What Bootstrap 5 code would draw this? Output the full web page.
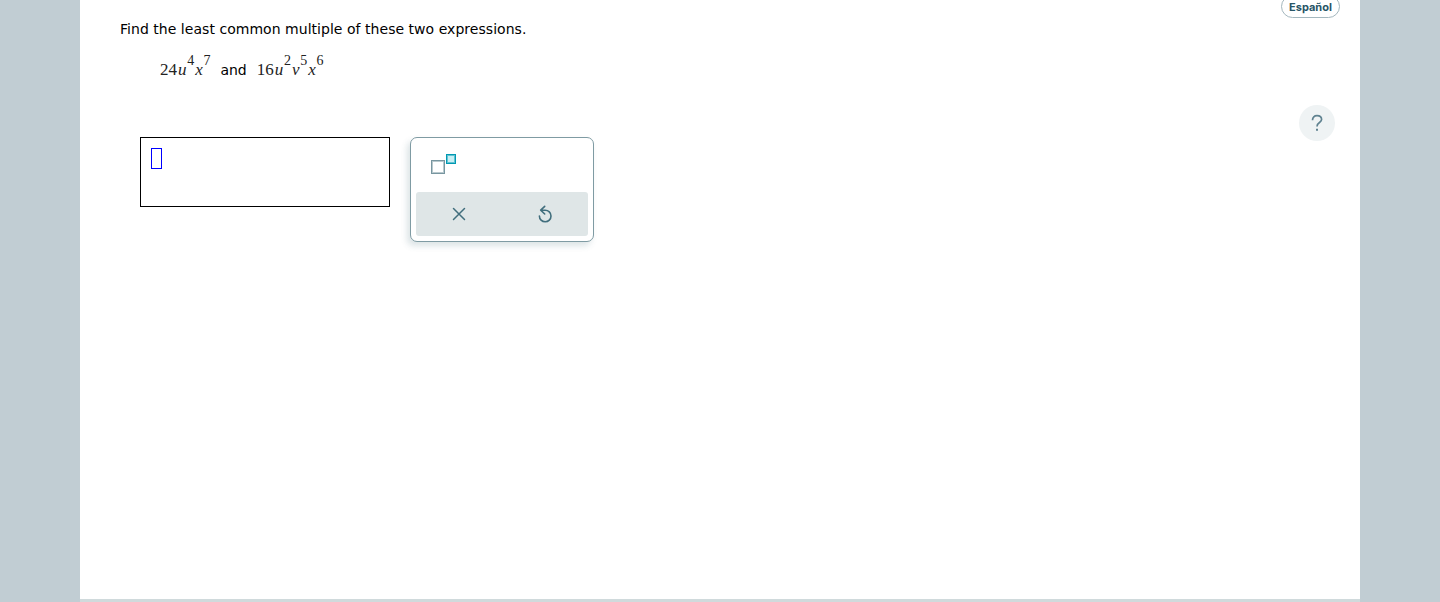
<!DOCTYPE html>
<html lang="en">

<head>
    <meta charset="UTF-8">
    <meta name="viewport" content="width=device-width, initial-scale=1.0">
    <title>Least Common Multiple</title>
    <link href="https://cdn.jsdelivr.net/npm/bootstrap@5.3.0/dist/css/bootstrap.min.css" rel="stylesheet">
    <style>
        body {
            background: #c1cdd3;
            color: #000;
            font-family: "DejaVu Sans", Verdana, sans-serif;
            font-size: 14px;
            line-height: 20px;
        }

        .sheet {
            width: 1280px;
            height: 602px;
            border-bottom: 3px solid #d0dadc;
            padding: 0 20px 0 40px;
        }

        .question {
            padding-top: 19px;
        }

        .prompt {
            letter-spacing: 0.035px;
        }

        .expressions {
            height: 30px;
            margin: 16px 0 0 40px;
            line-height: 30px;
        }

        .and-word {
            margin: 0 10px 0 10px;
        }

        .math {
            font-family: "Liberation Serif", "Times New Roman", serif;
            font-size: 17px;
            color: #222;
        }

        .math i {
            margin-left: 1px;
        }

        .math sup {
            font-size: 14px;
            line-height: 0;
            top: 0;
            vertical-align: 10px;
            margin-left: 0.7px;
        }

        .answer-row {
            gap: 20px;
            margin: 52px 0 0 20px;
        }

        .answer-box {
            width: 250px;
            height: 70px;
            border: 1px solid #000;
            padding: 10px;
        }

        .blank {
            width: 11px;
            height: 21px;
            border: 1px solid #00f;
        }

        .keypad {
            width: 184px;
            height: 105px;
            padding: 5px;
            border: 1px solid #7f9ba3;
            border-radius: 7px;
            box-shadow: -3px 4px 6px rgba(70, 110, 120, .19);
        }

        .keypad-top {
            height: 49px;
            padding: 10px 0 0 14px;
        }

        .keypad-actions {
            height: 44px;
            background: #dfe6e7;
            border-radius: 3px;
        }

        .key {
            border: 0;
            background: none;
            padding: 0;
        }

        .side {
            width: 61px;
        }

        .lang-btn {
            width: 59px;
            height: 23px;
            margin: -5px 0 0 2px;
            border: 1px solid #a4b7be;
            border-radius: 12px;
            background: #fff;
            color: #285566;
            font: 700 11px/14px Inter, sans-serif;
            padding: 1px 0 0;
        }

        .help-btn {
            width: 36px;
            height: 36px;
            margin: 87px 5px 0 0;
            border: 0;
            background: #eff3f4;
            padding: 0;
        }
    </style>
</head>

<body class="overflow-hidden">
    <main class="sheet mx-auto bg-white d-flex justify-content-between">
        <section class="question">
            <div class="prompt">Find the least common multiple of these two expressions.</div>
            <div class="expressions d-flex">
                <span class="math">24<i>u</i><sup>4</sup><i>x</i><sup>7</sup></span>
                <span class="and-word">and</span>
                <span class="math">16<i>u</i><sup>2</sup><i>v</i><sup>5</sup><i>x</i><sup>6</sup></span>
            </div>

            <div class="answer-row d-flex align-items-start">
                <div class="answer-box">
                    <div class="blank"></div>
                </div>
                <div class="keypad bg-white">
                    <div class="keypad-top">
                        <button type="button" class="key d-block" aria-label="Exponent">
                            <svg class="d-block" width="26" height="22" fill="none">
                                <rect x="1.5" y="7.5" width="13" height="13" stroke="#7896a0" />
                                <rect x="2.5" y="8.5" width="11" height="11" stroke="#b9c9ce" />
                                <rect x="16.5" y="1.5" width="9" height="9" stroke="#0099b3" fill="#c8eff4" />
                                <rect x="17.5" y="2.5" width="7" height="7" stroke="#60c2d1" />
                            </svg>
                        </button>
                    </div>
                    <div class="keypad-actions d-flex">
                        <button type="button" class="key flex-fill d-flex justify-content-center align-items-center" aria-label="Clear">
                            <svg width="14" height="14" fill="none" stroke="#416e7d" stroke-width="1.5" stroke-linecap="round">
                                <path d="M1.5 1.5 12.5 12.5M12.5 1.5 1.5 12.5" />
                            </svg>
                        </button>
                        <button type="button" class="key flex-fill d-flex justify-content-center align-items-center" aria-label="Reset">
                            <svg width="14" height="18" fill="none" stroke="#416e7d" stroke-width="1.6" stroke-linecap="round" stroke-linejoin="round">
                                <path d="M6.7 1.4 2.7 5.2 6.7 9M2.7 5.2H7.2A5.8 5.8 0 1 1 1.4 11" />
                            </svg>
                        </button>
                    </div>
                </div>
            </div>
        </section>

        <aside class="side d-flex flex-column">
            <button type="button" class="lang-btn">Español</button>
            <button type="button" class="help-btn rounded-circle align-self-end d-flex justify-content-center align-items-center" aria-label="Help">
                <svg width="12" height="18" fill="none" stroke="#5f8290" stroke-width="1.7">
                    <path d="M1.5 6.2C1.5 3.2 3.4 1.7 6 1.7S10.6 3.1 10.6 5.6C10.6 8.7 6 8.5 6 12.4" />
                    <path d="M6 14.8V16.8" stroke-width="2" />
                </svg>
            </button>
        </aside>
    </main>

    <script src="https://cdn.jsdelivr.net/npm/bootstrap@5.3.0/dist/js/bootstrap.bundle.min.js"></script>
</body>

</html>
